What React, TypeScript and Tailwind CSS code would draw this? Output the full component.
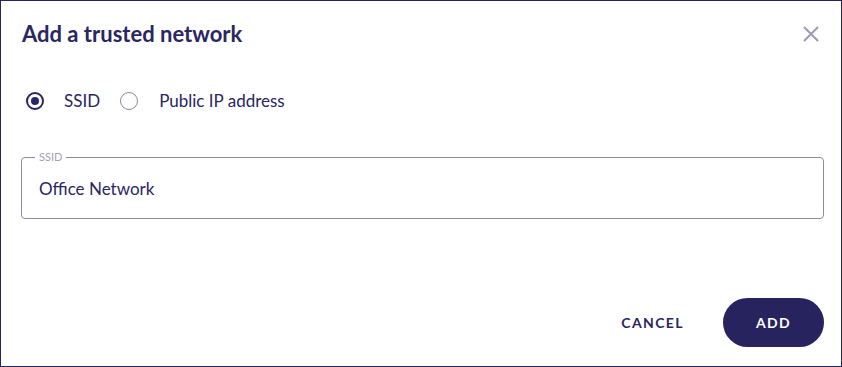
import React from "react";

export default function App() {
  return (
    <div
      className="w-[842px] h-[367px] bg-white border border-[#27235f] flex flex-col text-[#2a2661]"
      style={{ fontFamily: '"Source Sans Pro", Lato, "Noto Sans", sans-serif' }}
    >
      <div className="flex items-start justify-between pl-[21px] pr-[20px] pt-[19px]">
        <h1 className="text-[22px] font-bold leading-[28px]">Add a trusted network</h1>
        <button className="mt-[4px] text-[#9c9ab6]">
          <svg width="20" height="20" viewBox="0 0 20 20" fill="none" stroke="currentColor" strokeWidth="2">
            <path d="M3 3L17 17M17 3L3 17" />
          </svg>
        </button>
      </div>
      <div className="flex items-center pl-[25px] mt-[43px] h-[20px]">
        <label className="flex items-center">
          <span className="w-[18px] h-[18px] rounded-full border-2 border-[#2a2661] flex items-center justify-center">
            <span className="w-[8px] h-[8px] rounded-full bg-[#2a2661]" />
          </span>
          <span className="ml-[20px] text-[17px]">SSID</span>
        </label>
        <label className="flex items-center ml-[20px]">
          <span className="w-[18px] h-[18px] rounded-full border-[1.5px] border-[#8a87a6]" />
          <span className="ml-[21px] text-[17px]">Public IP address</span>
        </label>
      </div>
      <div className="ml-[20px] mr-[17px] mt-[46px] relative h-[62px] border border-[#8e8ba8] rounded-[4px] flex items-center px-[17px] pt-[2px]">
        <span className="absolute left-[13px] top-[-8px] px-[4px] bg-white text-[11px] leading-[14px] text-[#a3a1b8]">
          SSID
        </span>
        <span className="text-[17px]">Office Network</span>
      </div>
      <div className="flex-1" />
      <div className="flex items-center justify-end pr-[17px] pb-[19px] gap-[20px]">
        <button className="h-[49px] px-[19px] text-[14px] font-bold tracking-[0.1em]">CANCEL</button>
        <button className="h-[49px] w-[101px] rounded-full bg-[#27235f] text-white text-[14px] font-bold tracking-[0.1em]">
          ADD
        </button>
      </div>
    </div>
  );
}
